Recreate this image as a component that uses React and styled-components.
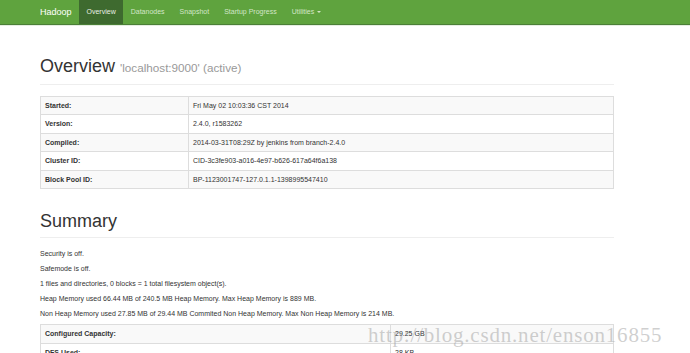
import { createGlobalStyle, styled } from "styled-components";

const GlobalStyle = createGlobalStyle`
    html, body {
        margin: 0;
        padding: 0;
        background: #fff;
    }
    body {
        font-family: "Liberation Sans", Arial, Helvetica, sans-serif;
        font-size: 7px;
        line-height: 10px;
        color: #333;
    }
`;

const overview = [
    ["Started:", "Fri May 02 10:03:36 CST 2014"],
    ["Version:", "2.4.0, r1583262"],
    ["Compiled:", "2014-03-31T08:29Z by jenkins from branch-2.4.0"],
    ["Cluster ID:", "CID-3c3fe903-a016-4e97-b626-617a64f6a138"],
    ["Block Pool ID:", "BP-1123001747-127.0.1.1-1398995547410"],
];

const summary = [
    "Security is off.",
    "Safemode is off.",
    "1 files and directories, 0 blocks = 1 total filesystem object(s).",
    "Heap Memory used 66.44 MB of 240.5 MB Heap Memory. Max Heap Memory is 889 MB.",
    "Non Heap Memory used 27.85 MB of 29.44 MB Commited Non Heap Memory. Max Non Heap Memory is 214 MB.",
];

const capacity = [
    ["Configured Capacity:", "29.25 GB"],
    ["DFS Used:", "28 KB"],
    ["Non DFS Used:", "7.61 GB"],
    ["DFS Remaining:", "21.64 GB"],
];

const navItems = ["Overview", "Datanodes", "Snapshot", "Startup Progress", "Utilities"];

function InfoTable({ rows, labelWidth }) {
    return (
        <Table>
            <tbody>
                {rows.map(([label, value], i) => (
                    <Row key={label} $striped={i % 2 === 0}>
                        <Th $width={labelWidth}>{label}</Th>
                        <Td>{value}</Td>
                    </Row>
                ))}
            </tbody>
        </Table>
    );
}

function App() {
    return (
        <Page>
            <GlobalStyle />
            <Navbar>
                <Brand>Hadoop</Brand>
                <NavList>
                    {navItems.map((item) => (
                        <NavItem key={item} $active={item === "Overview"}>
                            {item}
                            {item === "Utilities" && <Caret />}
                        </NavItem>
                    ))}
                </NavList>
            </Navbar>

            <Container>
                <PageHeader $top={31}>
                    <Heading>
                        Overview <Small>'localhost:9000' (active)</Small>
                    </Heading>
                </PageHeader>
                <InfoTable rows={overview} labelWidth={139} />

                <PageHeader $top={22}>
                    <Heading>Summary</Heading>
                </PageHeader>
                {summary.map((line) => (
                    <Para key={line}>{line}</Para>
                ))}
                <InfoTable rows={capacity} labelWidth={341} />
            </Container>

            <Watermark>http://blog.csdn.net/enson16855</Watermark>
        </Page>
    );
}

export default App;

const Page = styled.div`
    position: relative;
    height: 353px;
    overflow: hidden;
`;

const Navbar = styled.nav`
    display: flex;
    align-items: stretch;
    height: 24px;
    padding-left: 32.5px;
    background-color: #5fa33e;
    border-bottom: 1px solid #4b7f37;
    box-shadow: 0 1px 0 #e4eee0;
`;

const Brand = styled.div`
    display: flex;
    align-items: center;
    padding: 0 7.5px;
    font-size: 9px;
    color: #fff;
`;

const NavList = styled.ul`
    display: flex;
    margin: 0;
    padding: 0;
    list-style: none;
`;

const NavItem = styled.li`
    display: flex;
    align-items: center;
    padding: 0 7.5px;
    font-size: 7px;
    color: ${({ $active }) => ($active ? "#e8efe4" : "#d3e6c8")};
    background-color: ${({ $active }) => ($active ? "#3e6a2f" : "transparent")};
`;

const Caret = styled.span`
    display: inline-block;
    margin-left: 3px;
    width: 0;
    height: 0;
    border-top: 2px solid #d3e6c8;
    border-left: 2px solid transparent;
    border-right: 2px solid transparent;
`;

const Container = styled.div`
    width: 574px;
    margin-left: 40px;
`;

const PageHeader = styled.div`
    margin-top: ${({ $top }) => $top}px;
    margin-bottom: 10.5px;
    padding-bottom: 6px;
    border-bottom: 1px solid #eee;
`;

const Heading = styled.h1`
    margin: 0;
    font-size: 18px;
    font-weight: 400;
    line-height: 20px;
    color: #333;
`;

const Small = styled.small`
    font-size: 11.7px;
    color: #999;
`;

const Para = styled.p`
    margin: 0 0 5px;
    font-size: 7px;
    line-height: 10px;
`;

const Table = styled.table`
    width: 100%;
    border-collapse: collapse;
    border: 1px solid #ddd;
    margin-bottom: 10px;
`;

const Row = styled.tr`
    background-color: ${({ $striped }) => ($striped ? "#f9f9f9" : "#fff")};
`;

const Th = styled.th`
    width: ${({ $width }) => $width}px;
    padding: 4px;
    border: 1px solid #ddd;
    text-align: left;
    font-weight: 700;
    font-size: 7px;
    line-height: 9.6px;
`;

const Td = styled.td`
    padding: 4px;
    border: 1px solid #ddd;
    font-size: 7px;
    line-height: 9.6px;
`;

const Watermark = styled.div`
    position: absolute;
    left: 368px;
    top: 323px;
    font-family: "Liberation Serif", "Times New Roman", serif;
    font-size: 21px;
    letter-spacing: 0.8px;
    line-height: 24px;
    color: rgba(160, 160, 160, 0.5);
    white-space: nowrap;
    pointer-events: none;
`;
